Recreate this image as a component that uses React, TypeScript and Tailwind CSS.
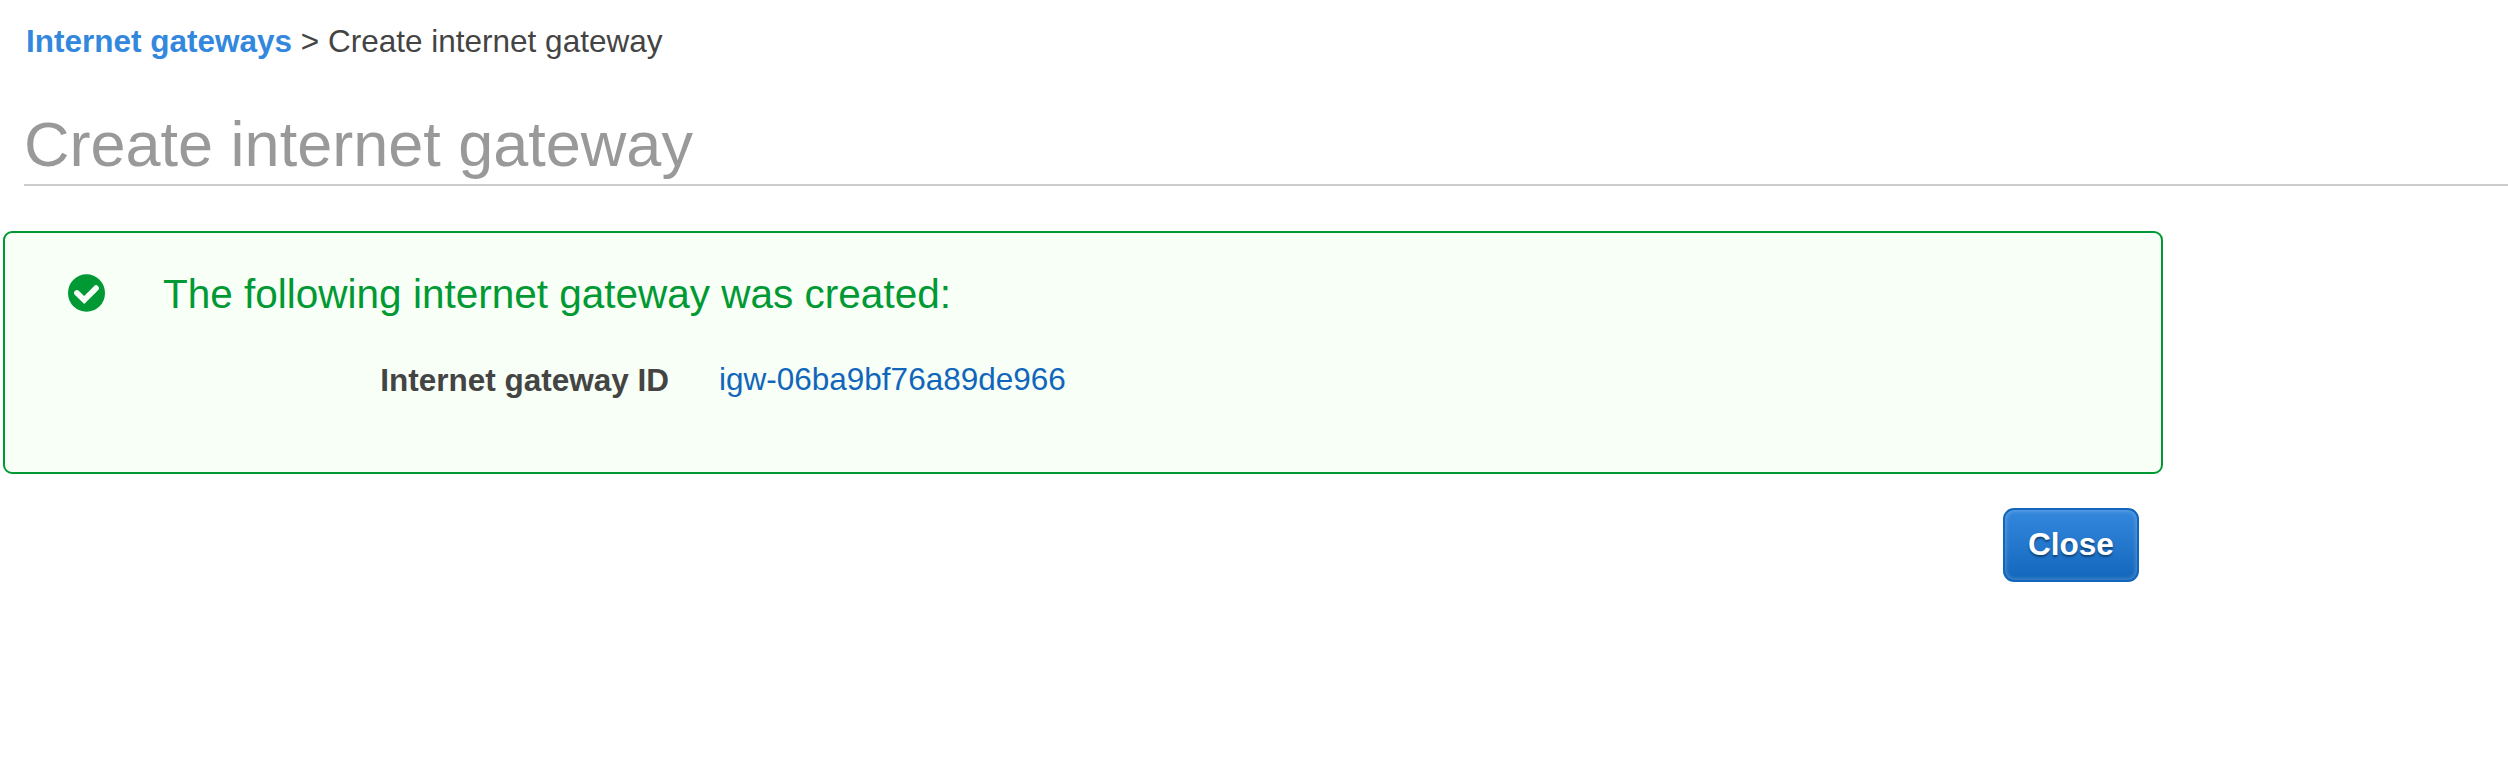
function CheckIcon() {
  return (
    <svg viewBox="0 0 38 38" className="h-[38px] w-[38px] shrink-0" aria-hidden="true">
      <ellipse cx="18.5" cy="19" rx="18.5" ry="18.8" fill="#009933" />
      <path
        d="M9 19 L16.2 26 L28 14.2"
        fill="none"
        stroke="#f7fff7"
        strokeWidth="5.8"
        strokeLinecap="round"
        strokeLinejoin="miter"
      />
    </svg>
  );
}

export default function App() {
  return (
    <div className="h-[771px] w-full overflow-hidden bg-white font-['Liberation_Sans',Arial,sans-serif] text-[31.5px] leading-[36px] text-[#444444]">
      <nav className="whitespace-nowrap pl-[26px] pt-[23px]">
        <a className="font-bold text-[#3388dd]">Internet gateways</a> &gt; Create internet gateway
      </nav>
      <h1 className="ml-6 mt-[49px] h-[78px] border-b-2 border-[#cccccc] text-[63px] leading-[72px] text-[#999999]">
        Create internet gateway
      </h1>
      <main className="ml-[3px] w-[2160px]">
        <section className="mt-[45px] h-[243px] rounded-[9px] border-2 border-[#009933] bg-[#f7fff7]">
          <div className="flex pl-[63px] pt-[37px]">
            <div className="pt-[4px]">
              <CheckIcon />
            </div>
            <h2 className="ml-[57px] text-[40.5px] leading-[48px] text-[#009933]">
              The following internet gateway was created:
            </h2>
          </div>
          <dl className="mt-[43px] flex">
            <dt className="w-[664px] pt-px text-right font-bold">Internet gateway ID</dt>
            <dd className="ml-[50px] text-[#1166bb]">igw-06ba9bf76a89de966</dd>
          </dl>
        </section>
        <div className="flex justify-end pr-6 pt-[34px]">
          <button className="h-[74px] w-[136px] rounded-[11px] border-2 border-[#1166bb] bg-linear-to-b from-[#3388dd] to-[#1166bb] pb-[2px] font-bold text-white shadow-[inset_0_0_5px_rgba(255,255,255,0.35)] [text-shadow:0_2px_2px_#114477]">
            Close
          </button>
        </div>
      </main>
    </div>
  );
}
